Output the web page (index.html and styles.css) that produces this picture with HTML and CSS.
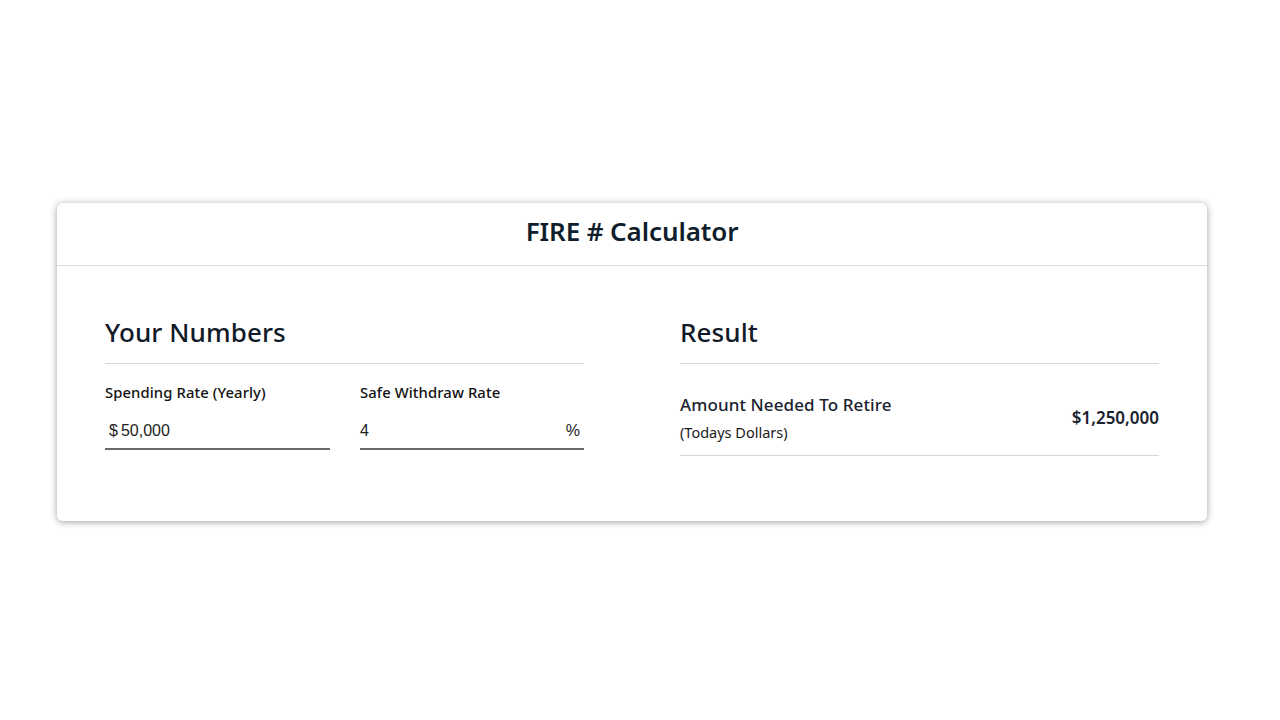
FILE: index.html
```html
<!DOCTYPE html>
<html lang="en">
<head>
<meta charset="utf-8">
<title>FIRE # Calculator</title>
<link rel="stylesheet" href="styles.css">
</head>
<body>
<main class="page">
  <section class="card">
    <header class="card-header">
      <h1 class="title">FIRE # Calculator</h1>
    </header>
    <div class="card-body">
      <div class="column">
        <h2 class="section-title">Your Numbers</h2>
        <div class="fields">
          <div class="field">
            <label class="field-label">Spending Rate (Yearly)</label>
            <div class="input-wrap">
              <span class="prefix">$</span>
              <span class="input-value">50,000</span>
            </div>
          </div>
          <div class="field">
            <label class="field-label">Safe Withdraw Rate</label>
            <div class="input-wrap">
              <span class="input-value">4</span>
              <span class="suffix">%</span>
            </div>
          </div>
        </div>
      </div>
      <div class="column">
        <h2 class="section-title">Result</h2>
        <div class="result-row">
          <div class="result-text">
            <div class="result-label">Amount Needed To Retire</div>
            <div class="result-sub">(Todays Dollars)</div>
          </div>
          <div class="result-value">$1,250,000</div>
        </div>
      </div>
    </div>
  </section>
</main>
</body>
</html>
```
FILE: styles.css
```css
* { box-sizing: border-box; }
html, body { margin: 0; padding: 0; background: #fff; }
body {
  font-family: "Noto Sans", "Open Sans", sans-serif;
  color: #16202e;
}
.page {
  height: 720px;
  padding: 203px 0 0 57px;
}
.card {
  width: 1150px;
  background: #fff;
  border-radius: 6px;
  box-shadow: 0 1px 7px rgba(0,0,0,0.38);
}
.card-header {
  height: 63px;
  border-bottom: 1px solid #dcdcdc;
  display: flex;
  align-items: center;
  justify-content: center;
  padding-bottom: 7px;
}
.title {
  margin: 0;
  font-size: 26px;
  font-weight: 600;
  color: #0f1e2d;
  letter-spacing: -0.1px;
}
.card-body {
  display: grid;
  grid-template-columns: 479px 479px;
  column-gap: 96px;
  align-items: start;
  padding: 48px 48px 65px;
}
.section-title {
  margin: 0;
  font-size: 26px;
  font-weight: 500;
  line-height: 36px;
  padding-bottom: 13px;
  border-bottom: 1px solid #d6d6d6;
  color: #111a28;
  letter-spacing: 0.1px;
}
.fields {
  display: grid;
  grid-template-columns: 225px 224px;
  column-gap: 30px;
  padding-top: 18px;
}
.field-label {
  display: block;
  font-size: 14.8px;
  font-weight: 500;
  color: #111;
  line-height: 20px;
  letter-spacing: 0.1px;
}
.input-wrap {
  margin-top: 12px;
  display: flex;
  align-items: center;
  height: 36px;
  border-bottom: 2px solid #676b70;
  font-family: "Liberation Sans", Arial, sans-serif;
  font-size: 16px;
  color: #222;
}
.prefix { padding-left: 4px; padding-right: 3px; }
.input-value { flex: 1; }
.suffix { padding-right: 4px; }
.result-row {
  display: flex;
  align-items: center;
  justify-content: space-between;
  padding: 29px 0 13px;
  border-bottom: 1px solid #d6d6d6;
}
.result-label {
  font-size: 17px;
  font-weight: 500;
  line-height: 24px;
  color: #1a2230;
  letter-spacing: 0.1px;
}
.result-sub {
  margin-top: 5px;
  font-size: 14.5px;
  line-height: 20px;
  color: #1a1a1a;
}
.result-value {
  font-size: 17px;
  font-weight: 600;
  color: #1a2230;
}
```
